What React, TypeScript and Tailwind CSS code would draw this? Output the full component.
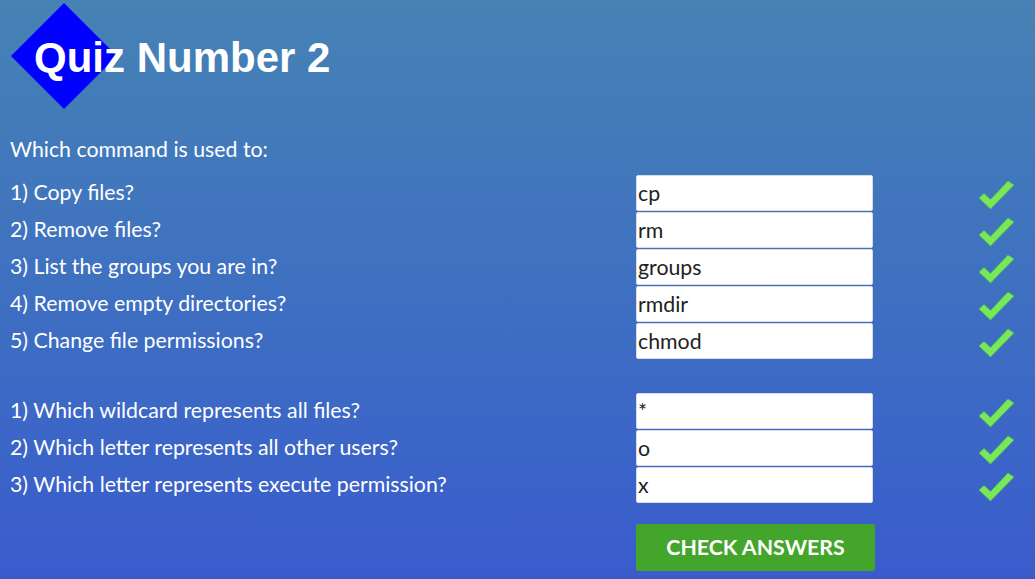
const groupOne = [
  { q: "1) Copy files?", a: "cp" },
  { q: "2) Remove files?", a: "rm" },
  { q: "3) List the groups you are in?", a: "groups" },
  { q: "4) Remove empty directories?", a: "rmdir" },
  { q: "5) Change file permissions?", a: "chmod" },
];

const groupTwo = [
  { q: "1) Which wildcard represents all files?", a: "*" },
  { q: "2) Which letter represents all other users?", a: "o" },
  { q: "3) Which letter represents execute permission?", a: "x" },
];

function Tick() {
  return (
    <svg width="37" height="31" viewBox="0 0 37 31" className="mt-[6px]">
      <path d="M1 18 L6 13.5 L12.5 19.5 L30 1 L36 5 L12.5 29 Z" fill="#76e85a" stroke="#5cb84a" strokeWidth="0.8" strokeLinejoin="round" />
    </svg>
  );
}

function Row({ q, a }: { q: string; a: string }) {
  return (
    <div className="flex h-[37px] items-center">
      <div className="w-[636px] pl-[10px] text-[21.3px] text-white">{q}</div>
      <input
        readOnly
        value={a}
        className="h-[36px] w-[237px] rounded-[2px] border border-[#d6dbe6] bg-white px-[1px] text-[21.3px] text-[#222] outline-none"
        style={{ fontFamily: "Lato, sans-serif" }}
      />
      <div className="ml-[105px]">
        <Tick />
      </div>
    </div>
  );
}

export default function App() {
  return (
    <div className="min-h-screen bg-gradient-to-b from-[#4682b4] to-[#3a5bcd] pb-[8px]" style={{ fontFamily: "Lato, sans-serif" }}>
      <div className="relative">
        <svg className="absolute left-[11px] top-[3px]" width="106" height="106" viewBox="0 0 106 106">
          <polygon points="53,0 106,53 53,106 0,53" fill="#0000ff" />
        </svg>
        <h1
          className="relative pl-[34px] pt-[37px] text-[42px] font-bold leading-none text-white"
          style={{ fontFamily: '"Liberation Sans", Arial, sans-serif' }}
        >
          Quiz Number 2
        </h1>
      </div>
      <div className="mt-[58px] pl-[10px] text-[21.3px] leading-[24px] text-white">Which command is used to:</div>
      <div className="mt-[13px]">
        {groupOne.map((r) => (
          <Row key={r.q} q={r.q} a={r.a} />
        ))}
      </div>
      <div className="mt-[33px]">
        {groupTwo.map((r) => (
          <Row key={r.q} q={r.q} a={r.a} />
        ))}
      </div>
      <div className="mt-[21px] pl-[636px]">
        <button className="h-[47px] w-[239px] rounded-[2px] bg-[#44a52c] text-[21.3px] font-bold text-white">CHECK ANSWERS</button>
      </div>
    </div>
  );
}
